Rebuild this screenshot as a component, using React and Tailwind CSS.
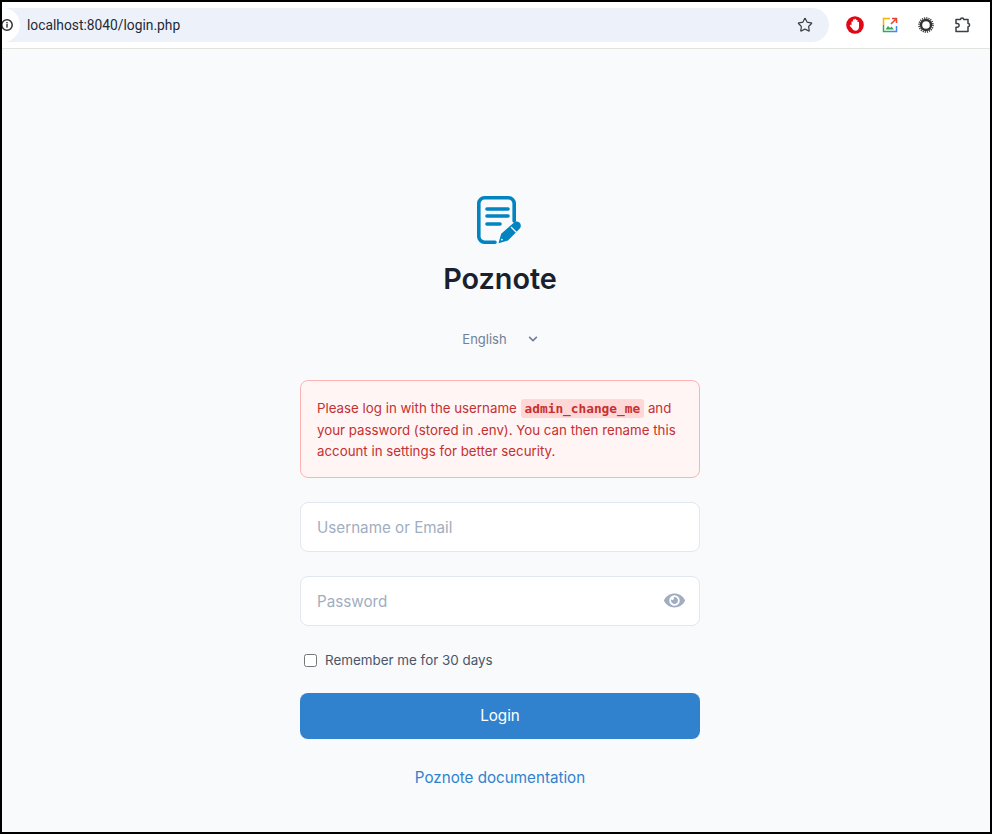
import React from "react";
import { Star } from "lucide-react";
import { FaEye, FaChevronDown } from "react-icons/fa";

function Toolbar() {
  return (
    <div className="h-[47px] shrink-0 bg-white border-b border-[#e2e4e0] flex items-center pr-[14px]">
      <div className="w-[827px] h-[34px] -mt-[1px] bg-[#edf2fa] rounded-r-[17px] flex items-center pr-[16px] overflow-hidden">
        <div className="w-[18px] h-[34px] bg-white rounded-r-[17px] flex items-center justify-start shrink-0">
          <svg width="14" height="14" viewBox="0 0 14 14" className="shrink-0 -ml-[2px]">
            <circle cx="7" cy="7" r="5.2" fill="none" stroke="#303030" strokeWidth="1.5" />
            <rect x="6.3" y="6" width="1.4" height="3.6" fill="#303030" />
            <rect x="6.3" y="4" width="1.4" height="1.4" fill="#303030" />
          </svg>
        </div>
        <span className="ml-[7px] mt-[1px] text-[13.8px] text-[#1f2937] font-['Roboto',sans-serif] flex-1">localhost:8040/login.php</span>
        <Star size={16} strokeWidth={1.8} className="text-[#3c4043]" />
      </div>
      {/* Extensiones */}
      <div className="flex items-center ml-[17px] gap-[20px]">
        <svg width="18" height="18" viewBox="0 0 18 18">
          <circle cx="9" cy="9" r="8.8" fill="#e30613" />
          <path d="M5.5 9V6a.75.75 0 0 1 1.5 0V4a.75.75 0 0 1 1.5 0V3.6a.75.75 0 0 1 1.5 0V4.4a.75.75 0 0 1 1.5 0v2.2a.75.75 0 0 1 1.5 0V11c0 2.2-1.5 3.8-3.5 3.8-1.7 0-2.6-.9-3.3-2.2L3.9 10c-.5-.8.6-1.7 1.1-1Z" fill="#fff" />
        </svg>
        <svg width="16" height="16" viewBox="0 0 16 16" fill="none" className="-ml-[2px]">
          <path d="M8 1.5H1.5V8" stroke="#f4b400" strokeWidth="1.5" />
          <path d="M1.5 8v6.5H8" stroke="#34a853" strokeWidth="1.5" />
          <path d="M8 14.5h6.5V9" stroke="#4285f4" strokeWidth="1.5" />
          <path d="M10 1.5h4.5V6M14.5 1.5 9 7" stroke="#ea4335" strokeWidth="1.5" />
          <path d="M3.5 12.5 6 9l2 2 1.5-1.5 2.5 3Z" fill="#34a853" />
        </svg>
        <svg width="16" height="16" viewBox="0 0 16 16" fill="none">
          <circle cx="8" cy="8" r="5" stroke="#333" strokeWidth="2.4" />
          <circle cx="8" cy="8" r="7" stroke="#333" strokeWidth="1.6" strokeDasharray="1.2 1" />
        </svg>
        <svg width="18" height="18" viewBox="0 0 18 18" fill="none" stroke="#3c4043" strokeWidth="1.5" strokeLinejoin="round">
          <path d="M2 3.5h4.5a1.6 1.6 0 0 1 3.2 0H14v4a1.6 1.6 0 0 1 0 3.2v4.8H2v-4.2h1.2a1.9 1.9 0 0 0 0-3.8H2Z" />
        </svg>
      </div>
    </div>
  );
}

function Logo() {
  return (
    <svg width="46" height="50" viewBox="0 0 46 50" fill="none" className="block">
      <path d="M18 46.2H7.5a5.7 5.7 0 0 1-5.7-5.7V7.5a5.7 5.7 0 0 1 5.7-5.7h24a5.7 5.7 0 0 1 5.7 5.7V25" stroke="#0284c0" strokeWidth="3.6" strokeLinecap="round" />
      <path d="M10 13h21M10 20h21M10 28h13" stroke="#0284c0" strokeWidth="3.6" strokeLinecap="round" />
      <path d="M36.5 27a3.8 3.8 0 0 1 6.3 5.5L31 44.5l-9.5 2.7 2.7-9.5Z" fill="#0284c0" />
      <path d="M34 31l5.5 5.5" stroke="#f8fafc" strokeWidth="1.3" />
      <path d="M25.5 44.3l-1.2-1.2" stroke="#f8fafc" strokeWidth="1.6" />
    </svg>
  );
}

export default function App() {
  return (
    <div className="font-['Inter',sans-serif] w-[992px] h-[834px] border-2 border-black bg-[#f8fafc] flex flex-col overflow-hidden">
      <Toolbar />
      <div className="flex flex-col items-center pt-[147px] pl-[8px]">
        <Logo />
        <h1 className="mt-[16px] text-[28.8px] leading-[34px] font-semibold text-[#1a202c]">Poznote</h1>

        <div className="mt-[31px] h-[24px] flex items-center gap-[21px] text-[13px] text-[#718096]">
          <span className="mt-[1px]">English</span>
          <FaChevronDown size={10} />
        </div>

        <div className="w-[400px] mt-[29px] flex flex-col">
          {/* Aviso */}
          <div className="h-[98px] border border-[#feb2b2] bg-[#fff5f5] rounded-[8px] px-[16px] pt-[17px] text-[13.3px] leading-[21.5px] text-[#c53030]">
            Please log in with the username{" "}
            <code className="font-['DejaVu_Sans_Mono',monospace] font-bold text-[12.8px] bg-[#fed7d7] rounded-[3px] px-[4px] py-[2px]">admin_change_me</code>{" "}
            and your password (stored in .env). You can then rename this account in settings for better security.
          </div>

          <input
            type="text"
            placeholder="Username or Email"
            className="mt-[24px] h-[50px] w-full bg-white border border-[#e2e8f0] rounded-[8px] px-[16px] text-[15.2px] placeholder:text-[#a0aec0] outline-none"
          />

          <div className="relative mt-[24px]">
            <input
              type="password"
              placeholder="Password"
              className="h-[50px] w-full bg-white border border-[#e2e8f0] rounded-[8px] px-[16px] text-[15.2px] placeholder:text-[#a0aec0] outline-none"
            />
            <FaEye size={21} className="absolute right-[15px] top-[14px] text-[#a0aec0]" />
          </div>

          <label className="mt-[24px] h-[20px] flex items-center pl-[4px] gap-[8px] text-[13.4px] text-[#4a5568]">
            <input type="checkbox" className="w-[13px] h-[13px] m-0 appearance-auto" />
            Remember me for 30 days
          </label>

          <button className="mt-[23px] h-[46px] w-full bg-[#3182ce] text-white text-[15.2px] font-normal rounded-[8px]">Login</button>

          <a href="#" className="mt-[27px] text-center text-[15.2px] leading-[24px] text-[#3182ce]">Poznote documentation</a>
        </div>
      </div>
    </div>
  );
}
